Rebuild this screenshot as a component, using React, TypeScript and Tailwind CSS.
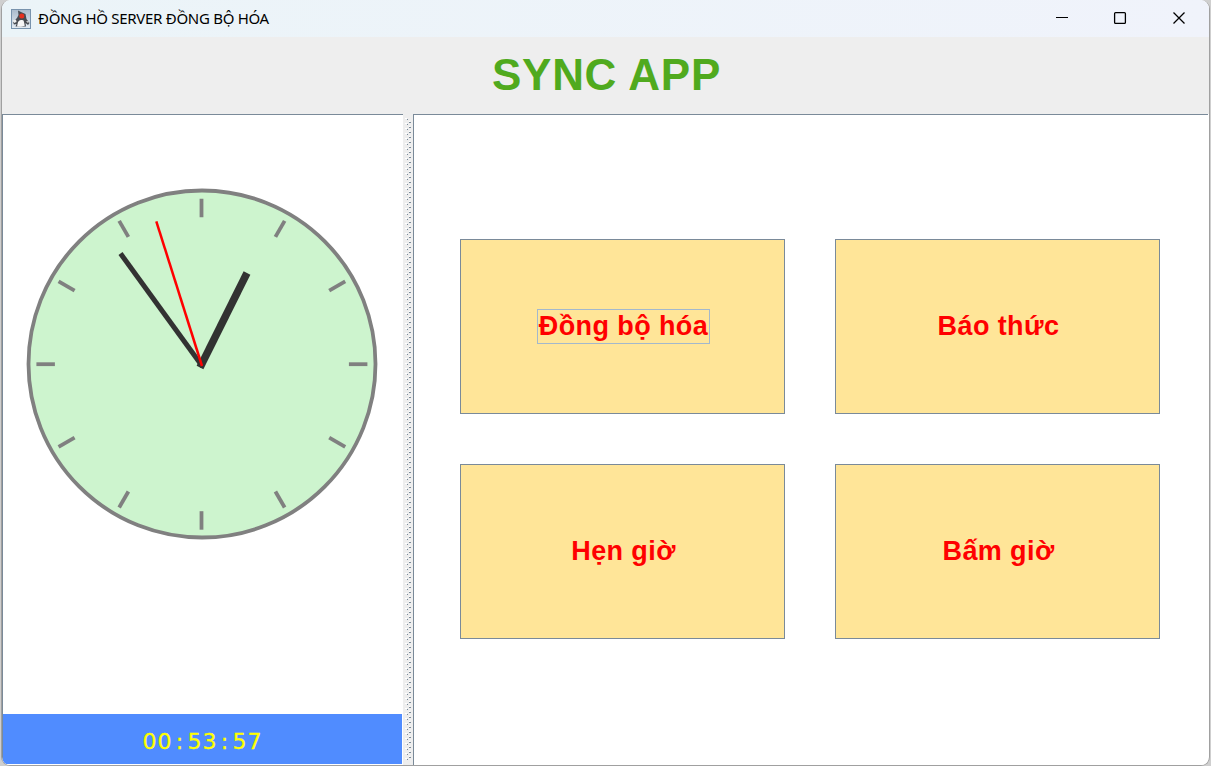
const modes = [
  { label: "Đồng bộ hóa", focused: true },
  { label: "Báo thức", focused: false },
  { label: "Hẹn giờ", focused: false },
  { label: "Bấm giờ", focused: false },
];

function AppIcon() {
  return (
    <svg width="20" height="20" viewBox="0 0 20 20" className="shrink-0">
      <defs>
        <linearGradient id="sky" x1="0" y1="0" x2="0" y2="1">
          <stop offset="0" stopColor="#a9bacb" />
          <stop offset="1" stopColor="#e3ebf3" />
        </linearGradient>
      </defs>
      <rect x="0.5" y="0.5" width="19" height="19" fill="url(#sky)" stroke="#7893ad" />
      <path d="M7 1.5 L10 3 L14.5 5 L15.5 10 L18.5 14 L17 16 L14.5 14 L15 17.5 L4.5 17.5 L5.5 15 L3 15.5 L1.8 13 L6 9 L7.5 6Z" fill="#484b51" />
      <path d="M6 17.5 L7 13 Q8.5 10.5 10.5 11 Q13 10.5 13 13 L13.8 16.8 L10 17.8Z" fill="#f6f6f6" />
      <path d="M1.5 11.5 L5 10.5 L5.5 13 L3 14Z" fill="#eeeeee" />
      <path d="M15 12 L18 12.5 L17 14Z" fill="#eeeeee" />
      <circle cx="10.8" cy="7.1" r="2.5" fill="#e5301f" />
    </svg>
  );
}

function TitleBar() {
  return (
    <header className="flex h-[37px] shrink-0 items-center bg-linear-to-r from-[#ebf4f8] to-[#f0f3fb] pl-[9px]">
      <AppIcon />
      <span className="ml-[7px] whitespace-nowrap pb-px font-['Noto_Sans',sans-serif] text-[15px] tracking-[-0.29px] text-black">
        ĐỒNG HỒ SERVER ĐỒNG BỘ HÓA
      </span>
      <svg width="132" height="14" viewBox="0 0 132 14" className="mr-[22px] mb-px ml-auto" fill="none" stroke="#000">
        <path d="M1 6.5h12" />
        <rect x="59.6" y="1.6" width="10.8" height="10.8" rx="1" strokeWidth="1.3" />
        <path d="M118.5 1.5l11 11M129.5 1.5l-11 11" strokeWidth="1.3" />
      </svg>
    </header>
  );
}

function Clock() {
  const ticks = Array.from({ length: 12 }, (_, i) => i * 30);
  return (
    <svg width="352" height="352" viewBox="0 0 352 352" className="mt-[73px] ml-[23px]">
      <circle cx="176" cy="176" r="173.5" fill="#cdf4ce" stroke="#808080" strokeWidth="3.8" />
      {ticks.map((a) => {
        const cx = a % 180 === 0 ? 175.5 : 175.9;
        return (
          <path
            key={a}
            d={`M${cx} 10.7v18.5`}
            transform={`rotate(${a} ${cx} 176.2)`}
            stroke="#808080"
            strokeWidth="3.8"
          />
        );
      })}
      <path d="M174 179.5L221 85" stroke="#323232" strokeWidth="7.5" />
      <path d="M176.5 178.5L94.5 65.5" stroke="#323232" strokeWidth="5" />
      <path d="M176 178L130.3 33.3" stroke="#ff0000" strokeWidth="2.5" />
    </svg>
  );
}

function DigitalTime({ value }: { value: string }) {
  return (
    <div className="mr-px mb-px flex h-[50px] justify-center bg-[#508cff] pt-[5px] pr-px font-['DejaVu_Sans',sans-serif] text-[22px] text-[#ffff00] [-webkit-text-stroke:0.3px_#ffff00]">
      {[...value].map((c, i) => (
        <span key={i} className="flex h-[45px] w-[15px] items-center justify-center">
          {c}
        </span>
      ))}
    </div>
  );
}

function Divider() {
  return (
    <svg width="10" height="651" className="shrink-0 bg-[#eeeeee]" shapeRendering="crispEdges">
      <defs>
        <pattern id="bumps" x="2" y="4" width="6" height="5" patternUnits="userSpaceOnUse">
          <path d="M0 0h2v1H0zM4 3h1v1H4z" fill="#fff" />
          <path d="M2 1h1v1H2zM4 4h2v1H4z" fill="#7a8a99" />
        </pattern>
      </defs>
      <rect x="2" y="4" width="6" height="643" fill="url(#bumps)" />
    </svg>
  );
}

export default function App() {
  return (
    <div className="h-[766px] w-[1211px] overflow-hidden bg-[#cfcfcf] pr-px pl-px">
      <div className="flex h-[766px] flex-col overflow-hidden rounded-[9px] border-x border-b border-[#a0a0a0] bg-white">
        <TitleBar />
        <div className="flex h-[77px] shrink-0 items-center justify-center bg-[#eeeeee] pb-[2px] pl-[2px] font-['Liberation_Sans',sans-serif] text-[44px] font-bold tracking-[0.7px] text-[#50aa1e]">
          SYNC APP
        </div>
        <main className="flex h-[651px] shrink-0">
          <section className="flex w-[401px] flex-col justify-between border-t border-l border-[#7a8a99] bg-white">
            <Clock />
            <DigitalTime value="00:53:57" />
          </section>
          <Divider />
          <section className="mr-px flex-1 border-t border-l border-[#7a8a99] bg-white pt-[124px] pl-[46px]">
            <div className="grid grid-cols-[325px_325px] grid-rows-[175px_175px] gap-[50px]">
              {modes.map((m) => (
                <button
                  key={m.label}
                  className="flex items-center justify-center border border-[#7a8a99] bg-[#ffe598] pl-[2px] font-['Liberation_Sans',sans-serif] text-[27px] font-bold tracking-[0.4px] text-[#ff0000]"
                >
                  <span
                    className={
                      m.focused
                        ? "flex h-[35px] w-[173px] items-center justify-center whitespace-nowrap border border-[#a3b8cc]"
                        : "whitespace-nowrap"
                    }
                  >
                    {m.label}
                  </span>
                </button>
              ))}
            </div>
          </section>
        </main>
      </div>
    </div>
  );
}
